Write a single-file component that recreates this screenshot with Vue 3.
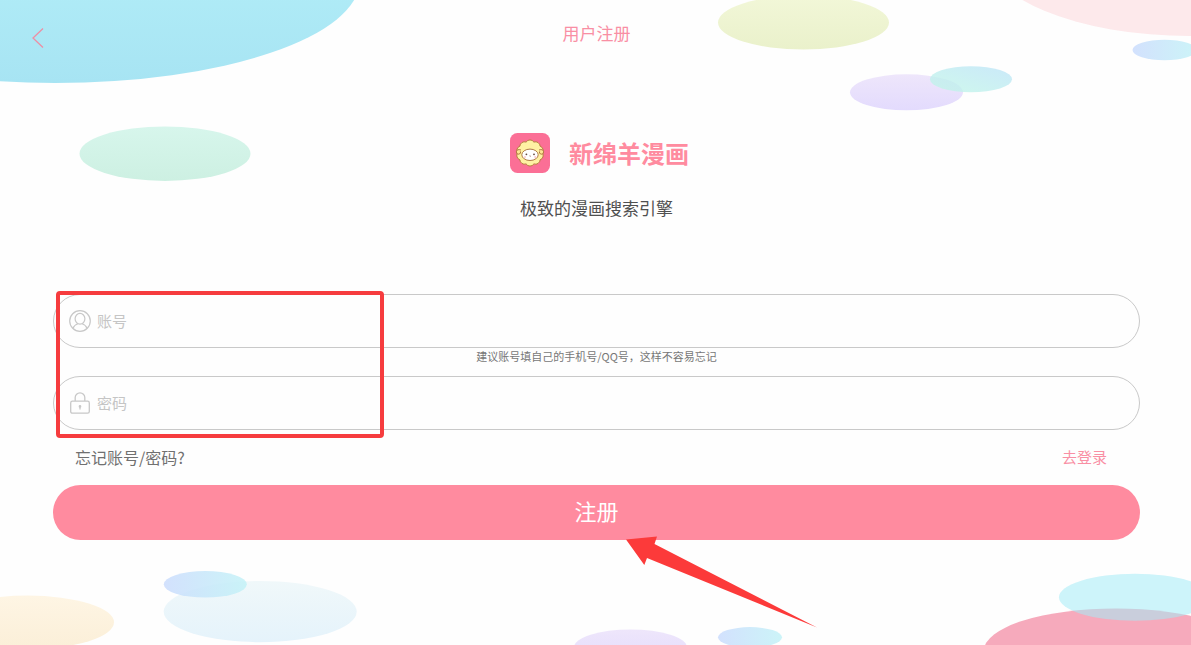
<script setup>
import { ref } from 'vue'

const account = ref('')
const password = ref('')
</script>

<template>
  <main class="page">
    <svg class="backdrop" viewBox="0 0 1191 645" preserveAspectRatio="none" aria-hidden="true">
      <defs>
        <linearGradient id="sky" x2="0" y2="1"><stop offset="0.5" stop-color="#b0ecf7" /><stop offset="1" stop-color="#a7e4f3" /></linearGradient>
        <linearGradient id="mint" x2="0" y2="1"><stop stop-color="#d7f6ec" /><stop offset="1" stop-color="#cdf0e2" /></linearGradient>
        <linearGradient id="lime" x2="0" y2="1"><stop stop-color="#f2f7d8" /><stop offset="1" stop-color="#eaf1cb" /></linearGradient>
        <linearGradient id="lilac" x2="0" y2="1"><stop stop-color="#eee6fb" /><stop offset="1" stop-color="#e3dbfd" /></linearGradient>
        <linearGradient id="aqua" x1="0" y1="1" x2="1" y2="0"><stop stop-color="#bff7e6" /><stop offset="1" stop-color="#b9e2f8" /></linearGradient>
        <linearGradient id="blue" x2="1" y2="0"><stop stop-color="#cbdcfd" /><stop offset="1" stop-color="#c3f2f7" /></linearGradient>
        <linearGradient id="ice" x2="0" y2="1"><stop stop-color="#f0f8fa" /><stop offset="1" stop-color="#e5f3fb" /></linearGradient>
        <linearGradient id="cream" x2="0" y2="1"><stop stop-color="#fef5e4" /><stop offset="1" stop-color="#fbefd8" /></linearGradient>
      </defs>
      <ellipse cx="55" cy="-20" rx="305" ry="103" fill="url(#sky)" />
      <ellipse cx="165" cy="153.7" rx="85.5" ry="27.2" fill="url(#mint)" />
      <ellipse cx="803.5" cy="22.5" rx="85.5" ry="27" fill="url(#lime)" />
      <ellipse cx="906.5" cy="92.3" rx="56.5" ry="18" fill="url(#lilac)" />
      <ellipse cx="971" cy="79.3" rx="41" ry="13" fill="url(#aqua)" opacity="0.75" />
      <ellipse cx="1190" cy="-50" rx="206" ry="86" fill="#fde9eb" />
      <ellipse cx="1164.5" cy="50" rx="32" ry="10.2" fill="url(#blue)" opacity="0.85" />
      <ellipse cx="28" cy="622.3" rx="86" ry="26.7" fill="url(#cream)" />
      <ellipse cx="260.2" cy="611.6" rx="96.5" ry="30.6" fill="url(#ice)" />
      <ellipse cx="205.3" cy="584.3" rx="41.5" ry="13.3" fill="url(#blue)" opacity="0.85" />
      <ellipse cx="630.5" cy="647.5" rx="56.5" ry="18" fill="url(#lilac)" />
      <ellipse cx="750" cy="637.3" rx="32" ry="10.2" fill="url(#blue)" opacity="0.85" />
      <ellipse cx="1116" cy="650.5" rx="132" ry="42" fill="#f6aabc" />
      <ellipse cx="1135" cy="597.3" rx="76" ry="23.5" fill="#a4ebf5" opacity="0.55" />
    </svg>

    <header class="topbar">
      <button class="back" type="button" aria-label="返回">
        <svg width="14" height="22" viewBox="0 0 14 22"><path d="M12 1.500 2 11l10 9.500" fill="none" stroke="#ed8fa5" stroke-width="1.300" /></svg>
      </button>
      <h1 class="title">用户注册</h1>
    </header>

    <section class="brand">
      <div class="brand-row">
        <svg class="logo" width="40" height="40" viewBox="0 0 40 40" aria-hidden="true">
          <rect width="40" height="40" rx="7.500" fill="#fb6f96" />
          <path d="M32.500 20A4.600 4.600 0 0 1 30.100 26.800A4.600 4.600 0 0 1 23.900 30.900A4.600 4.600 0 0 1 16.100 30.900A4.600 4.600 0 0 1 9.900 26.800A4.600 4.600 0 0 1 7.500 20A4.600 4.600 0 0 1 9.900 13.200A4.600 4.600 0 0 1 16.100 9.100A4.600 4.600 0 0 1 23.900 9.100A4.600 4.600 0 0 1 30.100 13.200A4.600 4.600 0 0 1 32.500 20z" fill="#fff1a3" stroke="#b07b38" stroke-width="0.900" />
          <ellipse cx="20" cy="21.800" rx="8.200" ry="5.700" fill="#fff" stroke="#a66d38" stroke-width="0.900" />
          <path d="M11 17q-4-1.300-4.600 1.700-.2 2.900 2.400 2.500 2.600-.6 1.600-2.800M29 17q4-1.300 4.600 1.700.2 2.900-2.400 2.500-2.600-.6-1.600-2.800" fill="#ffe794" stroke="#a66d38" stroke-width="0.900" />
          <circle cx="16.400" cy="21.300" r="0.900" fill="#66493e" /><circle cx="24" cy="21.300" r="0.900" fill="#66493e" />
          <path d="m19.400 22.800.8.500.8-.5" fill="none" stroke="#8c5b50" stroke-width="0.700" />
          <circle cx="15" cy="23.900" r="1" fill="#fbc8cd" /><circle cx="25.200" cy="23.900" r="1" fill="#fbc8cd" />
        </svg>
        <h2 class="name">新绵羊漫画</h2>
      </div>
      <p class="slogan">极致的漫画搜索引擎</p>
    </section>

    <form class="form" @submit.prevent>
      <div class="field">
        <label for="account" aria-label="账号">
          <svg width="22" height="22" viewBox="0 0 22 22" fill="none" stroke="#c8c8c8" stroke-width="1.200">
            <circle cx="11" cy="11" r="10.300" /><ellipse cx="11" cy="8.800" rx="4.900" ry="5.400" />
            <path d="M3.900 18.500q1.400-3.700 5-4.800M13.100 13.700q3.600 1.100 5 4.800" />
          </svg>
        </label>
        <input id="account" v-model="account" type="text" placeholder="账号" autocomplete="username">
      </div>
      <p class="hint">建议账号填自己的手机号/QQ号，这样不容易忘记</p>
      <div class="field">
        <label for="password" aria-label="密码">
          <svg width="22" height="22" viewBox="0 0 22 22" fill="none" stroke="#c8c8c8" stroke-width="1.300">
            <rect x="1.700" y="9.200" width="18.600" height="12" rx="1.700" /><path d="M6.200 9V5.600a4.800 4.800 0 0 1 9.600 0V9" />
            <path d="M11 14v3.500" /><circle cx="11" cy="14.400" r="0.700" fill="#c8c8c8" />
          </svg>
        </label>
        <input id="password" v-model="password" type="password" placeholder="密码" autocomplete="new-password">
      </div>
      <div class="links">
        <a class="forgot" href="#">忘记账号/密码?</a>
        <a class="login" href="#">去登录</a>
      </div>
      <button class="submit" type="submit">注册</button>

      <div class="marker" aria-hidden="true"></div>
      <svg class="arrow" width="192" height="92" viewBox="0 0 192 92" aria-hidden="true">
        <path d="M0 3.500 31 .5 28.500 8 191 91.500 21 22 18.300 29z" fill="#fc3a3a" />
      </svg>
    </form>
  </main>
</template>

<style>
body {
  margin: 0;
  background: #fefefe;
}
</style>

<style scoped>
.page {
  position: relative;
  box-sizing: border-box;
  min-height: 100vh;
  overflow: hidden;
  font-family: "Noto Sans CJK SC", sans-serif;
  color: #555;
}
.backdrop {
  position: absolute;
  inset: 0;
  width: 100%;
  height: 100%;
}
.topbar,
.brand,
.form {
  position: relative;
}
.topbar {
  display: grid;
  grid-template-columns: 60px 1fr 58px;
  height: 66px;
  align-items: center;
}
.back {
  display: flex;
  margin-top: 10px;
  padding: 0 0 0 31px;
  border: 0;
  background: none;
  cursor: pointer;
}
h1,
h2,
p {
  margin: 0;
}
.title {
  text-align: center;
  font-size: 17px;
  line-height: 24px;
  font-weight: 400;
  color: #f98fa4;
}
.brand {
  padding-top: 67px;
  text-align: center;
}
.brand-row {
  display: flex;
  align-items: center;
  justify-content: center;
  gap: 19px;
  padding-left: 8px;
}
.name {
  font-size: 24px;
  line-height: 40px;
  font-weight: 700;
  color: #ff8b9f;
}
.slogan {
  margin-top: 23px;
  padding-left: 2px;
  font-size: 17px;
  line-height: 24px;
  color: #505050;
}
.form {
  padding: 74px 51px 24px 53px;
}
.field {
  display: flex;
  align-items: center;
  gap: 6px;
  box-sizing: border-box;
  height: 54px;
  padding: 0 24px 0 15px;
  border: 1px solid #c9c9c9;
  border-radius: 27px;
  background: #fefefe;
}
.field label {
  display: flex;
}
.field input {
  flex: 1;
  min-width: 0;
  padding: 0;
  border: 0;
  outline: 0;
  background: none;
  font: inherit;
  font-size: 15px;
  line-height: 24px;
  color: #555;
}
.field input::placeholder {
  color: #c5c5c5;
  opacity: 1;
}
.hint {
  height: 28px;
  text-align: center;
  font-size: 11px;
  line-height: 16px;
  color: #777;
}
.links {
  display: flex;
  align-items: center;
  justify-content: space-between;
  box-sizing: border-box;
  height: 55px;
  padding: 0 33px 2px 22px;
  font-size: 15px;
  line-height: 24px;
}
.links a {
  text-decoration: none;
}
.forgot {
  font-size: 16px;
  color: #707070;
}
.login {
  color: #f98fa4;
}
.submit {
  display: block;
  box-sizing: border-box;
  width: 100%;
  height: 55px;
  padding: 0 0 5px;
  border: 0;
  border-radius: 28px;
  background: #ff8b9f;
  font: inherit;
  font-size: 22px;
  line-height: 32px;
  color: #fff;
  cursor: pointer;
}
.marker {
  position: absolute;
  top: 71px;
  left: 56px;
  box-sizing: border-box;
  width: 328px;
  height: 147px;
  border: 4px solid #f63c3e;
  border-radius: 4px;
  pointer-events: none;
}
.arrow {
  position: absolute;
  top: 316px;
  left: calc(50% + 30px);
  pointer-events: none;
}
</style>
